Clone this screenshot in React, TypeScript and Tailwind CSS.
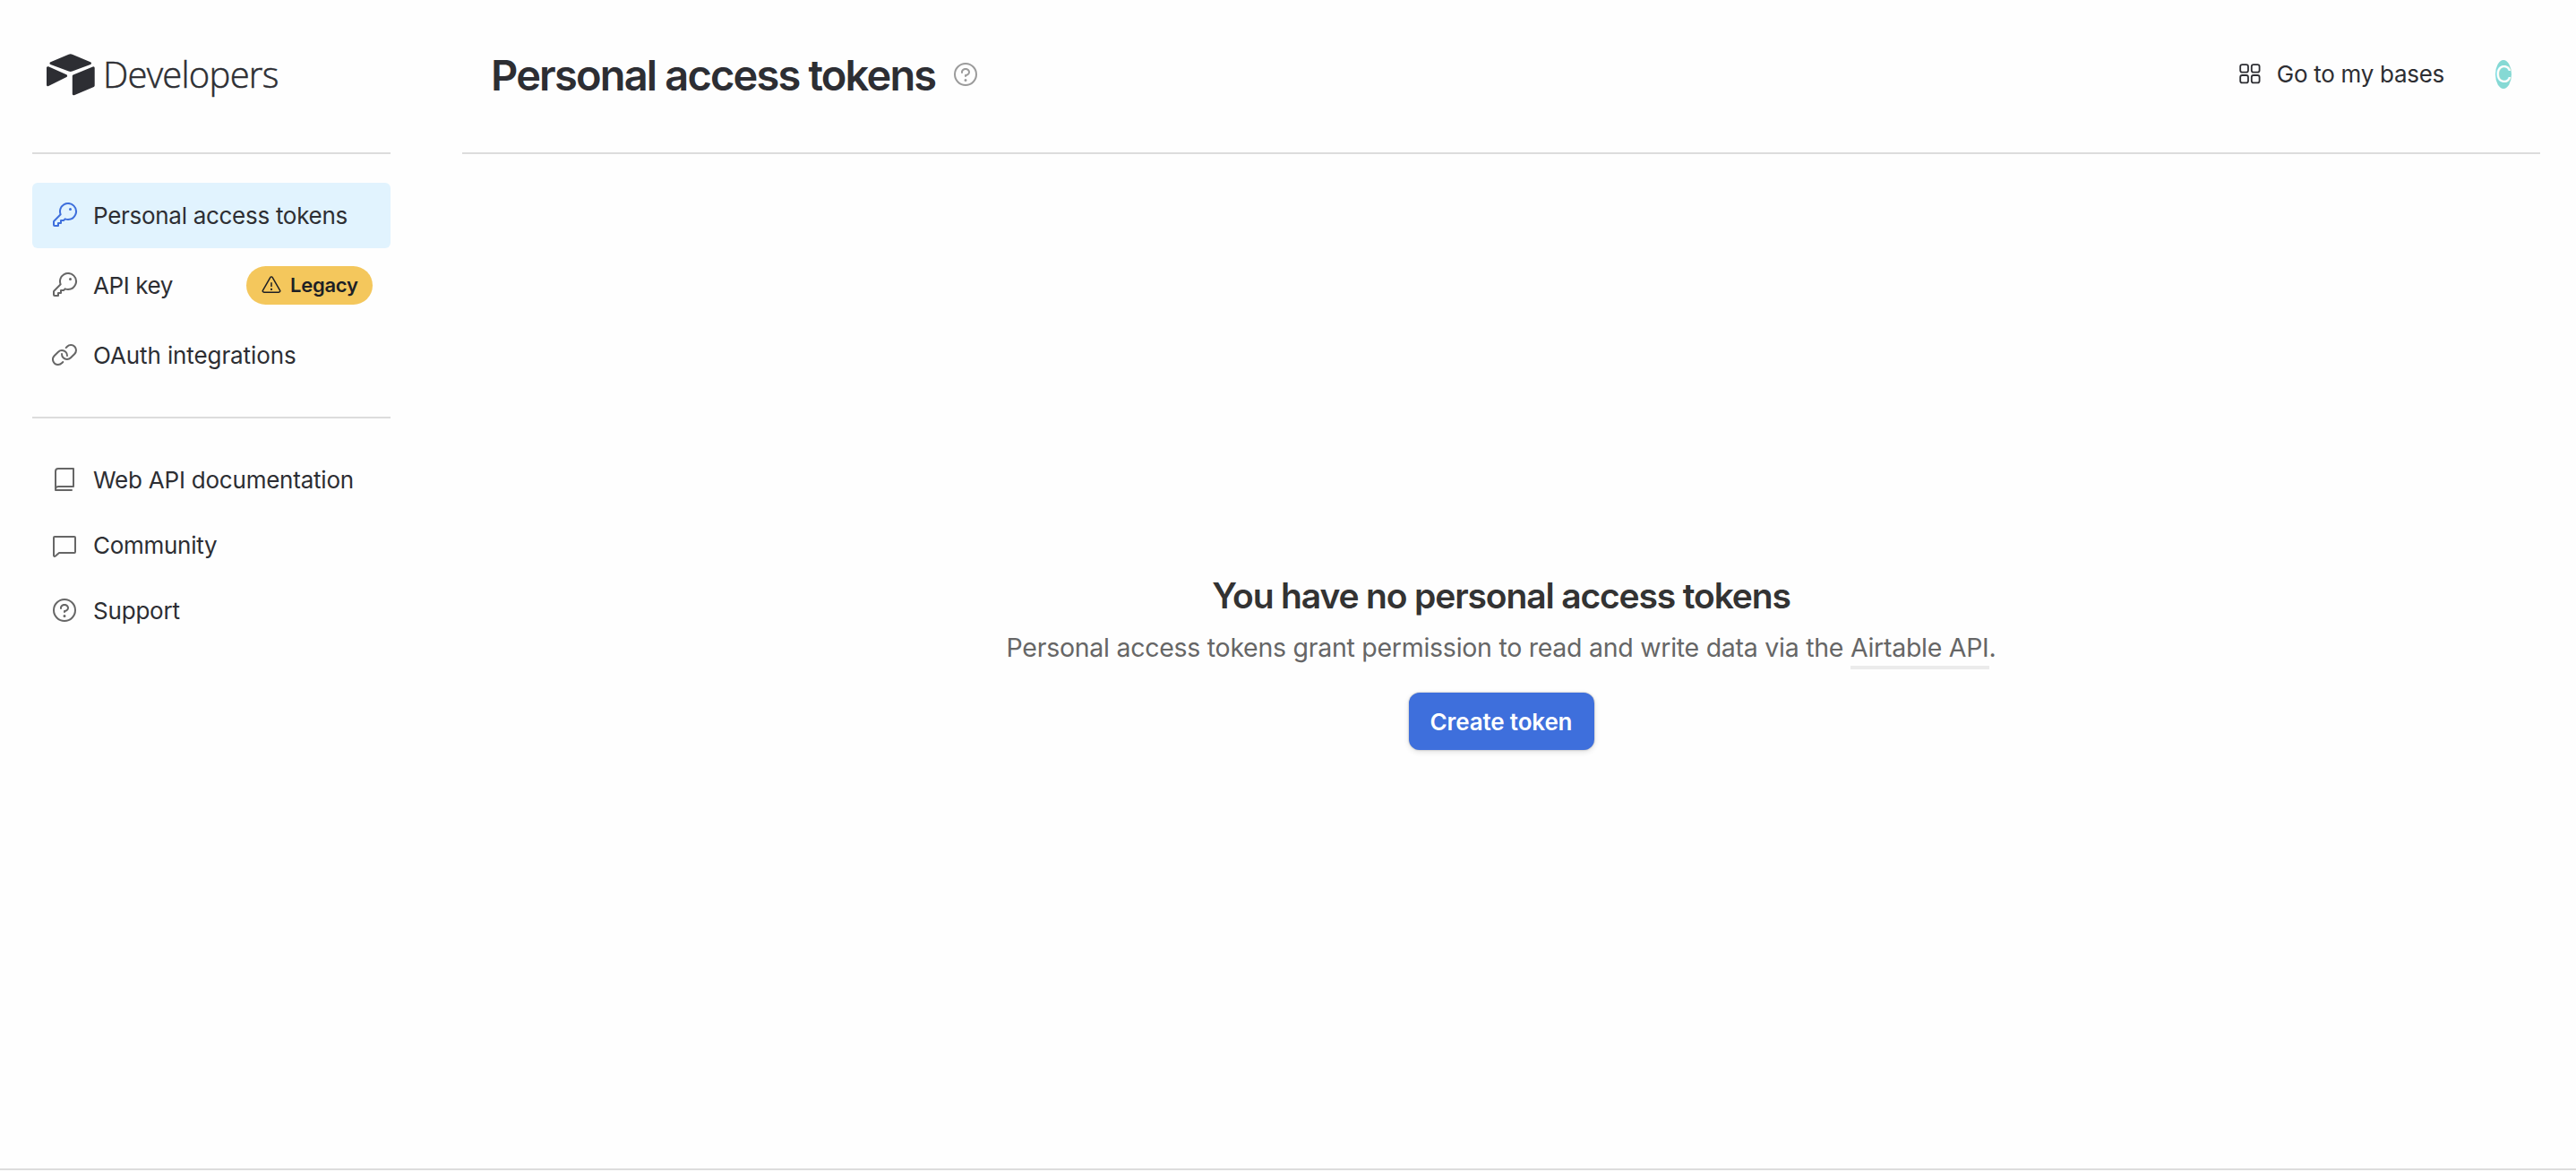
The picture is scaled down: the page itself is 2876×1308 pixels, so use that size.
import type { ReactNode } from "react";
import type { IconType } from "react-icons";
import { PiKey, PiLink, PiBook, PiChat, PiQuestion, PiWarning } from "react-icons/pi";

type NavLink = {
  label: string;
  icon: IconType;
  tracking: string;
  active?: boolean;
  legacy?: boolean;
};

const authLinks: NavLink[] = [
  { label: "Personal access tokens", icon: PiKey, tracking: "tracking-[-0.29px]", active: true },
  { label: "API key", icon: PiKey, tracking: "tracking-[-0.4px]", legacy: true },
  { label: "OAuth integrations", icon: PiLink, tracking: "tracking-[-0.1px]" },
];

const resourceLinks: NavLink[] = [
  { label: "Web API documentation", icon: PiBook, tracking: "tracking-[-0.22px]" },
  { label: "Community", icon: PiChat, tracking: "tracking-[-0.28px]" },
  { label: "Support", icon: PiQuestion, tracking: "tracking-[-0.2px]" },
];

function LogoMark() {
  return (
    <svg
      width="54"
      height="47"
      viewBox="0 0 54 47"
      fill="currentColor"
      stroke="currentColor"
      strokeWidth="3"
      strokeLinejoin="round"
      className="shrink-0"
    >
      <path d="M25.2 2.1Q26.7 1.5 28.2 2.1L48.4 10.7L28.2 18.2Q26.7 18.8 25.2 18.2L5 10.7Z" />
      <path d="M1.5 15.7V34.7L21.6 24.6Z" />
      <path d="M30.3 24.8V44.8L52.2 35.6V15.8Z" />
    </svg>
  );
}

function BasesIcon() {
  return (
    <svg width="24" height="23" viewBox="0 0 24 23" fill="none" stroke="currentColor" strokeWidth="1.8">
      <rect x="1.2" y="1.2" width="8.8" height="8.4" rx="2.2" />
      <rect x="13.8" y="1.2" width="8.8" height="8.4" rx="2.2" />
      <rect x="1.2" y="13" width="8.8" height="8.4" rx="2.2" />
      <rect x="13.8" y="13" width="8.8" height="8.4" rx="2.2" />
    </svg>
  );
}

function LegacyBadge() {
  return (
    <span className="ml-auto flex h-[43px] w-[141px] items-center gap-[9px] rounded-full bg-[#f4c75c] pl-4 text-[22px] font-semibold tracking-[-0.25px] text-[#1d1f25]">
      <PiWarning className="mb-0.5 size-6" />
      Legacy
    </span>
  );
}

function NavItem({ link }: { link: NavLink }) {
  const Icon = link.icon;
  return (
    <a
      className={`flex h-[73px] items-center rounded-md pr-5 pl-5 ${link.active ? "bg-[#e1f3fe]" : ""}`}
    >
      <Icon className={`mb-0.5 size-8 shrink-0 ${link.active ? "text-[#3e6fdc]" : "text-[#666666]"}`} />
      <span className={`ml-4 whitespace-nowrap ${link.tracking}`}>{link.label}</span>
      {link.legacy && <LegacyBadge />}
    </a>
  );
}

function Divider() {
  return <div className="h-0.5 w-full shrink-0 bg-[#dcdcdc]" />;
}

function Header({ children }: { children: ReactNode }) {
  return <div className="flex h-[170px] shrink-0 items-center pb-[3px]">{children}</div>;
}

function Sidebar() {
  return (
    <aside className="flex w-[400px] shrink-0 flex-col">
      <Header>
        <div className="flex items-center gap-[9px] pl-4 text-[#2d2e33]">
          <LogoMark />
          <span className="pb-px font-['Open_Sans',sans-serif] text-[40px] leading-none font-light tracking-[-0.75px] [-webkit-text-stroke:0.5px_currentColor]">
            Developers
          </span>
        </div>
      </Header>
      <Divider />
      <nav className="mt-8 flex flex-col gap-[5px]">
        {authLinks.map((link) => (
          <NavItem key={link.label} link={link} />
        ))}
      </nav>
      <div className="mt-8">
        <Divider />
      </div>
      <nav className="mt-8 flex flex-col">
        {resourceLinks.map((link) => (
          <NavItem key={link.label} link={link} />
        ))}
      </nav>
    </aside>
  );
}

function EmptyState() {
  return (
    <div className="mt-[472px] flex flex-col items-center">
      <h2 className="text-[39px] leading-[42px] font-semibold tracking-[-1.14px] text-[#333333]">
        You have no personal access tokens
      </h2>
      <p className="mt-[19px] text-[28.5px] leading-9 tracking-[-0.27px] text-[#666666]">
        Personal access tokens grant permission to read and write data via the{" "}
        <a className="border-b-4 border-[#ebebeb] pb-[3px]">Airtable API</a>.
      </p>
      <button className="mt-8 h-16 w-[207px] rounded-xl bg-[#3e6fdc] text-[26px] font-semibold tracking-[-0.15px] text-white shadow-[0_0_2px_rgba(0,0,0,0.32),0_2px_6px_rgba(0,0,0,0.12)]">
        Create token
      </button>
    </div>
  );
}

export default function App() {
  return (
    <div className="flex h-[1308px] w-full flex-col bg-[#fefefe] font-['Inter',sans-serif] text-[26px] text-[#2d2e33]">
      <div className="flex h-[1304px] gap-20 pr-10 pl-9">
        <Sidebar />
        <main className="flex flex-1 flex-col">
          <Header>
            <h1 className="pl-8 text-[47px] leading-none font-semibold tracking-[-1.83px]">
              Personal access tokens
            </h1>
            <PiQuestion className="mb-0.5 ml-[18px] size-8 text-[#9b9b9b]" />
            <a className="mr-[57px] mb-0.5 ml-auto flex items-center gap-[18px] tracking-[-0.28px]">
              <BasesIcon />
              Go to my bases
            </a>
            <div className="mr-8 mb-px flex h-8 w-[18px] items-center justify-center overflow-hidden rounded-[50%] bg-[#86d9d4] text-[25px] leading-none text-white">
              C
            </div>
          </Header>
          <Divider />
          <EmptyState />
        </main>
      </div>
      <Divider />
    </div>
  );
}
